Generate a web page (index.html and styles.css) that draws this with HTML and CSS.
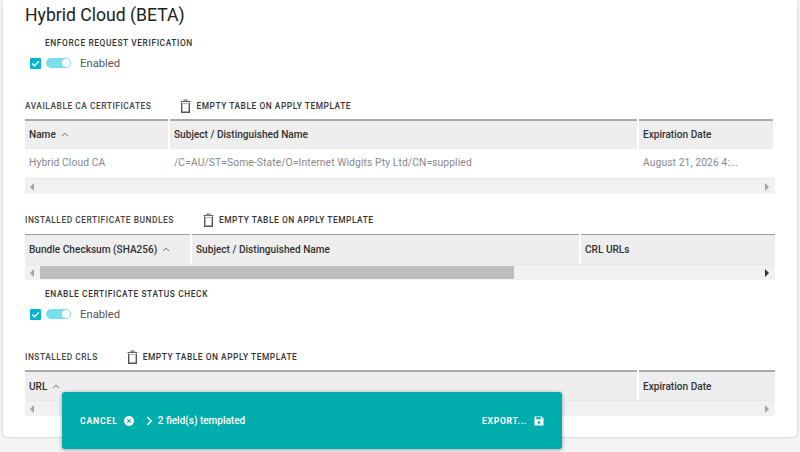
FILE: index.html
```html
<!DOCTYPE html>
<html lang="en">
<head>
<meta charset="utf-8">
<title>Hybrid Cloud</title>
<link rel="stylesheet" href="styles.css">
</head>
<body>
<main class="card">
  <h1 class="title">Hybrid Cloud (BETA)</h1>

  <section class="field field-first">
    <div class="field-label">Enforce Request Verification</div>
    <div class="toggle-row">
      <span class="check"><svg viewBox="0 0 11 11" width="11" height="11"><path d="M2.2 5.6 4.5 7.8 8.9 3.2" fill="none" stroke="#fff" stroke-width="1.5"/></svg></span>
      <span class="switch"><span class="knob"></span></span>
      <span class="toggle-text">Enabled</span>
    </div>
  </section>

  <section class="table-block block-ca">
    <div class="table-head">
      <span class="table-title">Available CA Certificates</span>
      <span class="empty"><svg class="trash" viewBox="0 0 11 14" width="11" height="14"><path d="M0.5 2.5h10M4 2.5V1h3v1.5" fill="none" stroke="#666" stroke-width="1.1"/><path d="M1.7 3.5V13.2h7.6V3.5" fill="none" stroke="#555" stroke-width="1.4"/><path d="M3 4.6h5" stroke="#aaa" stroke-width="1"/></svg>Empty table on apply template</span>
    </div>
    <div class="table cols-ca">
      <div class="th th-lift">Name <svg class="sort" viewBox="0 0 8 5" width="8" height="5"><path d="M1 4 4 1.2 7 4" fill="none" stroke="#777" stroke-width="1"/></svg></div>
      <div class="th th-lift">Subject / Distinguished Name</div>
      <div class="th th-lift">Expiration Date</div>
      <div class="td">Hybrid Cloud CA</div>
      <div class="td">/C=AU/ST=Some-State/O=Internet Widgits Pty Ltd/CN=supplied</div>
      <div class="td">August 21, 2026 4:...</div>
    </div>
    <div class="scrollbar">
      <span class="arrow arrow-left"></span>
      <span class="arrow arrow-right"></span>
    </div>
  </section>

  <section class="table-block block-bundles">
    <div class="table-head">
      <span class="table-title">Installed Certificate Bundles</span>
      <span class="empty"><svg class="trash" viewBox="0 0 11 14" width="11" height="14"><path d="M0.5 2.5h10M4 2.5V1h3v1.5" fill="none" stroke="#666" stroke-width="1.1"/><path d="M1.7 3.5V13.2h7.6V3.5" fill="none" stroke="#555" stroke-width="1.4"/><path d="M3 4.6h5" stroke="#aaa" stroke-width="1"/></svg>Empty table on apply template</span>
    </div>
    <div class="table cols-bundles">
      <div class="th th-thin">Bundle Checksum (SHA256) <svg class="sort" viewBox="0 0 8 5" width="8" height="5"><path d="M1 4 4 1.2 7 4" fill="none" stroke="#777" stroke-width="1"/></svg></div>
      <div class="th th-thin">Subject / Distinguished Name</div>
      <div class="th th-thin">CRL URLs</div>
    </div>
    <div class="scrollbar">
      <span class="arrow arrow-left"></span>
      <span class="thumb"></span>
      <span class="arrow arrow-right arrow-dark"></span>
    </div>
  </section>

  <section class="field field-second">
    <div class="field-label">Enable Certificate Status Check</div>
    <div class="toggle-row">
      <span class="check"><svg viewBox="0 0 11 11" width="11" height="11"><path d="M2.2 5.6 4.5 7.8 8.9 3.2" fill="none" stroke="#fff" stroke-width="1.5"/></svg></span>
      <span class="switch"><span class="knob"></span></span>
      <span class="toggle-text">Enabled</span>
    </div>
  </section>

  <section class="table-block block-crls">
    <div class="table-head">
      <span class="table-title">Installed CRLs</span>
      <span class="empty"><svg class="trash" viewBox="0 0 11 14" width="11" height="14"><path d="M0.5 2.5h10M4 2.5V1h3v1.5" fill="none" stroke="#666" stroke-width="1.1"/><path d="M1.7 3.5V13.2h7.6V3.5" fill="none" stroke="#555" stroke-width="1.4"/><path d="M3 4.6h5" stroke="#aaa" stroke-width="1"/></svg>Empty table on apply template</span>
    </div>
    <div class="table cols-crls">
      <div class="th">URL <svg class="sort" viewBox="0 0 8 5" width="8" height="5"><path d="M1 4 4 1.2 7 4" fill="none" stroke="#777" stroke-width="1"/></svg></div>
      <div class="th">Expiration Date</div>
    </div>
    <div class="scrollbar">
      <span class="arrow arrow-left"></span>
      <span class="arrow arrow-right"></span>
    </div>
  </section>
</main>

<aside class="toast">
  <span class="toast-action">Cancel</span>
  <svg class="toast-cancel" viewBox="0 0 10 10" width="10" height="10"><circle cx="5" cy="5" r="5" fill="#fff"/><path d="M3.3 3.3 6.7 6.7M6.7 3.3 3.3 6.7" stroke="#00adad" stroke-width="1.1"/></svg>
  <svg class="toast-chevron" viewBox="0 0 7 10" width="7" height="10"><path d="M1.2 1 5.2 5 1.2 9" fill="none" stroke="#fff" stroke-width="1.6"/></svg>
  <span class="toast-text">2 field(s) templated</span>
  <span class="toast-action toast-export">Export...</span>
  <svg class="toast-save" viewBox="0 0 10 10" width="10" height="10"><path d="M0.5 0.5H7.8L9.5 2.2V9.5H0.5Z" fill="#fff"/><rect x="2.2" y="1.2" width="4.6" height="2" fill="#00adad"/><circle cx="5" cy="6.6" r="1.4" fill="#00adad"/></svg>
</aside>
</body>
</html>
```

FILE: styles.css
```css
* { box-sizing: border-box; }

html, body {
  margin: 0;
  height: 452px;
  overflow: hidden;
}

body {
  position: relative;
  padding: 0 3px;
  background: #f4f4f4;
  font-family: Roboto, "Liberation Sans", sans-serif;
  color: #333;
}

.card {
  height: 437px;
  padding: 0 22px;
  background: #fff;
  border-radius: 0 0 5px 5px;
  box-shadow: 0 0 3px rgba(0, 0, 0, 0.22);
  overflow: hidden;
}

.title {
  margin: 0;
  padding-top: 3px;
  font-size: 17.6px;
  line-height: 24px;
  font-weight: 400;
  color: #212121;
}

.field-first { margin-top: 11px; }
.field-second { margin-top: 9px; }

.field-label {
  padding-left: 20px;
  font-size: 8.4px;
  line-height: 10px;
  font-weight: 500;
  letter-spacing: 0.6px;
  text-transform: uppercase;
  color: #333;
}

.toggle-row {
  display: flex;
  align-items: center;
  height: 14px;
  margin-top: 8px;
  padding-left: 5px;
}

.check {
  display: flex;
  width: 11px;
  height: 11px;
  background: #00b5cc;
  border-radius: 1px;
}

.switch {
  display: flex;
  justify-content: flex-end;
  align-items: center;
  width: 25px;
  height: 10px;
  margin-left: 5px;
  padding-right: 1px;
  background: #7adfec;
  border-radius: 5px;
}

.knob {
  width: 8px;
  height: 8px;
  background: #fff;
  border-radius: 50%;
}

.toggle-text {
  margin-left: 9px;
  font-size: 11.2px;
  letter-spacing: 0.05px;
  color: #555;
}

.block-ca { margin-top: 27px; }
.block-bundles { margin-top: 17px; }
.block-crls { margin-top: 27px; }

.table-head {
  display: flex;
  align-items: center;
  height: 16px;
  padding-top: 2px;
  margin-bottom: 6px;
}

.table-title {
  font-size: 8.4px;
  font-weight: 500;
  letter-spacing: 0.53px;
  text-transform: uppercase;
  color: #444;
}

.empty {
  display: flex;
  align-items: center;
  margin-left: 29px;
  font-size: 8.4px;
  font-weight: 500;
  letter-spacing: 0.54px;
  text-transform: uppercase;
  color: #333;
}

.trash { margin-right: 5px; }

.table { display: grid; }
.cols-ca { grid-template-columns: 145px 469px 136px; }
.cols-bundles { grid-template-columns: 167px 389px 194px; }
.cols-crls { grid-template-columns: 614px 136px; }

.th {
  display: flex;
  align-items: center;
  gap: 5px;
  height: 30px;
  padding-left: 4px;
  margin-right: 2px;
  background: #eee;
  border-top: 2px solid #aaa;
  font-size: 10.1px;
  font-weight: 500;
  color: #333;
}

.th:last-child { margin-right: 0; }

.th-lift { padding-bottom: 2px; }

.th-thin {
  margin-top: 1px;
  border-top-color: #999;
  border-top-width: 1px;
}

.td {
  display: flex;
  align-items: center;
  height: 29px;
  padding: 0 0 2px 4px;
  margin-right: 2px;
  font-size: 10.3px;
  letter-spacing: 0.1px;
  color: #888;
}

.td:last-child { margin-right: 0; }

.scrollbar {
  display: flex;
  align-items: center;
  justify-content: space-between;
  height: 16px;
  padding: 0 6px 0 5px;
  background: #f1f1f1;
  border-top: 1px solid #e8e8e8;
}

.arrow {
  width: 0;
  height: 0;
  border-top: 4px solid transparent;
  border-bottom: 4px solid transparent;
}

.arrow-left { border-right: 4px solid #a3a3a3; }
.arrow-right { border-left: 4px solid #a3a3a3; }
.arrow-dark { border-left-color: #333; }

.thumb {
  flex: 0 0 474px;
  height: 13px;
  margin-left: 6px;
  margin-right: auto;
  background: #bdbdbd;
}

.toast {
  position: absolute;
  left: 62px;
  top: 392px;
  display: flex;
  align-items: center;
  width: 500px;
  height: 57px;
  padding: 0 18px;
  background: #00adad;
  border-radius: 3px;
  box-shadow: 0 1px 4px rgba(0, 0, 0, 0.35);
  color: #fff;
}

.toast-action {
  font-size: 8.7px;
  font-weight: 700;
  letter-spacing: 0.8px;
  text-transform: uppercase;
}

.toast-cancel { margin-left: 6px; }
.toast-chevron { margin-left: 12px; }

.toast-text {
  margin-left: 5px;
  font-size: 10px;
  font-weight: 500;
}

.toast-export { margin-left: auto; letter-spacing: 0.65px; }
.toast-save { margin-left: 7px; }
```
